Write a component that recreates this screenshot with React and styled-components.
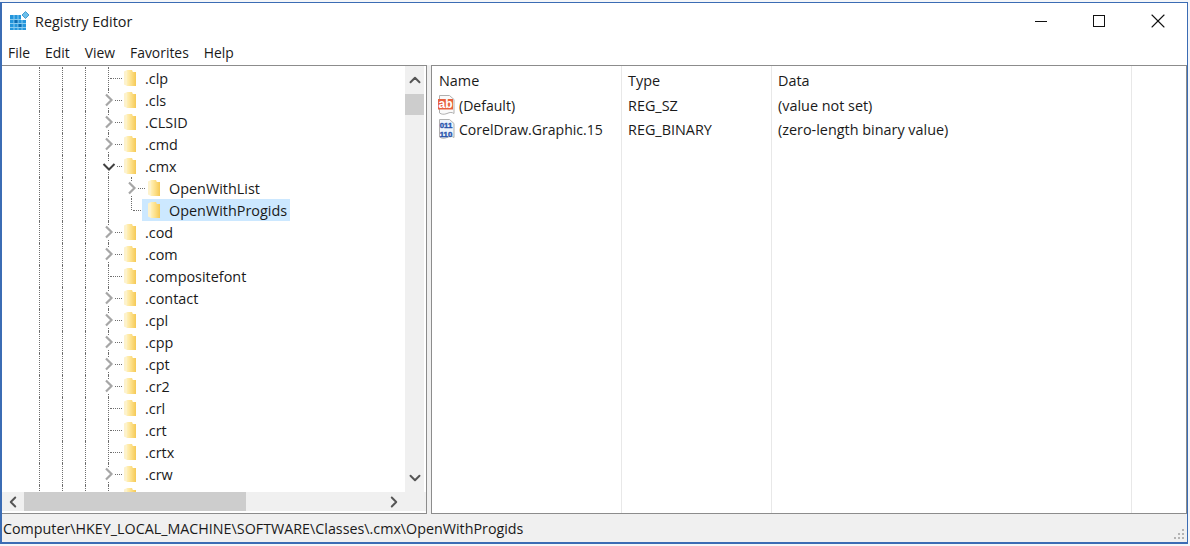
import React from 'react';
import styled, {createGlobalStyle} from 'styled-components';
import {X, ChevronUp, ChevronDown, ChevronLeft, ChevronRight} from 'lucide-react';

const treeItems = [
    {name: ".clp"},
    {name: ".cls", arrow: "closed"},
    {name: ".CLSID", arrow: "closed"},
    {name: ".cmd", arrow: "closed"},
    {name: ".cmx", arrow: "open"},
    {name: "OpenWithList", arrow: "closed", child: true},
    {name: "OpenWithProgids", child: true, last: true, selected: true},
    {name: ".cod", arrow: "closed"},
    {name: ".com", arrow: "closed"},
    {name: ".compositefont"},
    {name: ".contact", arrow: "closed"},
    {name: ".cpl", arrow: "closed"},
    {name: ".cpp", arrow: "closed"},
    {name: ".cpt", arrow: "closed"},
    {name: ".cr2", arrow: "closed"},
    {name: ".crl"},
    {name: ".crt"},
    {name: ".crtx"},
    {name: ".crw", arrow: "closed"},
    {name: ""},
];

const values = [
    {name: "(Default)", type: "REG_SZ", data: "(value not set)", kind: "string"},
    {name: "CorelDraw.Graphic.15", type: "REG_BINARY", data: "(zero-length binary value)", kind: "binary"},
];

const menus = ["File", "Edit", "View", "Favorites", "Help"];

const RegistryLogo = () => (
    <svg width="20" height="20" viewBox="0 0 20 20">
        <rect x="0" y="4" width="16" height="15" fill="#2496dc"/>
        <path d="M0 8.500h16M0 12.500h16M0 16.500h16M4 4v15M8 4v15M12 4v15" stroke="#8accf0" strokeWidth="1"/>
        <rect x="4.500" y="9" width="3" height="3" fill="#0f6cb0"/>
        <rect x="8.500" y="13" width="3" height="3" fill="#0f6cb0"/>
        <rect x="11" y="2" width="7" height="7" fill="#fff"/>
        <path d="M15.500 0.500l3.500 3.500-3.500 3.500-3.500-3.500z" fill="#6cbfeb" stroke="#2a8bc8" strokeWidth="0.800"/>
    </svg>
);

const Folder = () => (
    <svg width="12" height="18" viewBox="0 0 12 18">
        <defs>
            <linearGradient id="folderBody" x1="0" x2="1" y1="0" y2="0">
                <stop offset="0" stopColor="#fff0b8"/>
                <stop offset="0.450" stopColor="#fde08a"/>
                <stop offset="1" stopColor="#f5c955"/>
            </linearGradient>
        </defs>
        <path d="M0 2.500L3 1v16l-3-1.500z" fill="#fdf2cc"/>
        <path d="M3 1h5l0.800 2H12v14H3z" fill="url(#folderBody)"/>
    </svg>
);

const StringIcon = () => (
    <svg width="20" height="20" viewBox="0 0 20 20">
        <path d="M2.500 0.500h10l4.500 4v14c-2-1.400-4-1.400-7 0-3 1.200-5.500 0.900-7.500-0.500z" fill="#fafafa" stroke="#b0b0b0"/>
        <rect x="1" y="4" width="15" height="10.500" fill="#e8623f"/>
        <IconText x="8.500" y="12.500" size="12" fill="#fff">ab</IconText>
    </svg>
);

const BinaryIcon = () => (
    <svg width="20" height="20" viewBox="0 0 20 20">
        <path d="M2.500 0.500h10l4.500 4v14c-2-1.400-4-1.400-7 0-3 1.200-5.500 0.900-7.500-0.500z" fill="#eef4fc" stroke="#b0b0b0"/>
        <IconText x="9" y="8.500" size="7.800" fill="#2a56ad" stroke="#2a56ad" strokeWidth="0.400">011</IconText>
        <IconText x="9" y="17.500" size="7.800" fill="#2a56ad" stroke="#2a56ad" strokeWidth="0.400">110</IconText>
    </svg>
);

const IconText = styled.text.attrs(p => ({textAnchor: "middle", fontSize: p.size}))`
  font-family: "Liberation Sans", sans-serif;
  font-weight: 700;
`;

const TreeRow = ({item}) => {
    const guideCount = item.child ? 4 : 3;
    return (
        <Row>
            {Array.from({length: guideCount}).map((_, i) => <Guide key={i}/>)}
            <Branch $last={item.last}>
                {item.arrow === "closed" && (
                    <ClosedArrow width="10" height="14" viewBox="0 0 10 14">
                        <polyline points="2,1.500 7.500,7 2,12.500" fill="none" stroke="#a6a6a6" strokeWidth="2.200"/>
                    </ClosedArrow>
                )}
                {item.arrow === "open" && (
                    <OpenArrow width="14" height="10" viewBox="0 0 14 10">
                        <polyline points="1.500,2 7,7.500 12.500,2" fill="none" stroke="#404040" strokeWidth="2"/>
                    </OpenArrow>
                )}
            </Branch>
            <Label $selected={item.selected} $child={item.child}>
                <Folder/>
                {item.name && <span>{item.name}</span>}
            </Label>
        </Row>
    );
};

const App = () => {
    return (
        <>
            <GlobalStyle/>
            <Window>
                <TitleBar>
                    <RegistryLogo/>
                    <Title>Registry Editor</Title>
                    <WindowButtons>
                        <WindowButton><MinimizeLine/></WindowButton>
                        <WindowButton><MaximizeBox/></WindowButton>
                        <WindowButton><X size={24} strokeWidth={1.1} absoluteStrokeWidth/></WindowButton>
                    </WindowButtons>
                </TitleBar>
                <MenuBar>
                    {menus.map(m => <MenuItem key={m}>{m}</MenuItem>)}
                </MenuBar>
                <Panes>
                    <TreePane>
                        <TreeBody>
                            <Tree>
                                {treeItems.map((item, i) => <TreeRow key={i} item={item}/>)}
                            </Tree>
                            <VScroll>
                                <ScrollButton><ChevronUp size={18} strokeWidth={2.6}/></ScrollButton>
                                <VTrack><VThumb/></VTrack>
                                <ScrollButton><ChevronDown size={18} strokeWidth={2.6}/></ScrollButton>
                            </VScroll>
                        </TreeBody>
                        <HScroll>
                            <HButton><ChevronLeft size={18} strokeWidth={2.6}/></HButton>
                            <HTrack><HThumb/></HTrack>
                            <HButton><ChevronRight size={18} strokeWidth={2.6}/></HButton>
                            <Corner/>
                        </HScroll>
                    </TreePane>
                    <ListPane>
                        <Columns>
                            <Column $width={190} $inset={1}>
                                <Heading>Name</Heading>
                                {values.map(v => (
                                    <NameCell key={v.name}>
                                        {v.kind === "string" ? <StringIcon/> : <BinaryIcon/>}
                                        <span>{v.name}</span>
                                    </NameCell>
                                ))}
                            </Column>
                            <Column $width={150}>
                                <Heading>Type</Heading>
                                {values.map(v => <Cell key={v.name}>{v.type}</Cell>)}
                            </Column>
                            <Column $width={360}>
                                <Heading>Data</Heading>
                                {values.map(v => <Cell key={v.name}>{v.data}</Cell>)}
                            </Column>
                        </Columns>
                    </ListPane>
                </Panes>
                <StatusBar>
                    <span>Computer\HKEY_LOCAL_MACHINE\SOFTWARE\Classes\.cmx\OpenWithProgids</span>
                    <Grip viewBox="0 0 12 12" width="12" height="12">
                        <path d="M9 1h2v2H9zM5 5h2v2H5zM9 5h2v2H9zM1 9h2v2H1zM5 9h2v2H5zM9 9h2v2H9z" fill="#b4b4b4"/>
                    </Grip>
                </StatusBar>
            </Window>
        </>
    );
}

const GlobalStyle = createGlobalStyle`
  html, body {
    margin: 0;
    padding: 0;
    background: #f4f6f9;
  }
  body {
    font-family: "Open Sans", "Noto Sans", sans-serif;
    font-size: 14.4px;
    color: #1a1a1a;
  }
`;

const Window = styled.div`
  box-sizing: border-box;
  width: 1188px;
  height: 542px;
  margin-top: 2px;
  display: flex;
  flex-direction: column;
  background: #fff;
  border-style: solid;
  border-color: #3b6cb4;
  border-width: 1px 1px 2px 2px;
  overflow: hidden;
`;

const TitleBar = styled.div`
  flex: none;
  box-sizing: border-box;
  height: 38px;
  padding: 0 0 2px 8px;
  display: flex;
  align-items: center;
`;

const Title = styled.div`
  margin-left: 5px;
  font-size: 14.400px;
`;

const WindowButtons = styled.div`
  margin-left: auto;
  display: flex;
`;

const WindowButton = styled.div`
  width: 58.500px;
  height: 34px;
  display: flex;
  align-items: center;
  justify-content: center;
  color: #111;
`;

const MinimizeLine = styled.div`
  width: 12px;
  height: 1px;
  background: #111;
`;

const MaximizeBox = styled.div`
  box-sizing: border-box;
  width: 12px;
  height: 12px;
  border: 1px solid #111;
`;

const MenuBar = styled.div`
  flex: none;
  height: 24px;
  display: flex;
  align-items: center;
  padding-left: 6px;
  gap: 15px;
  font-size: 13.900px;
  background: #fff;
`;

const MenuItem = styled.div`
  line-height: 22px;
`;

const Panes = styled.div`
  flex: 1;
  min-height: 0;
  display: flex;
  gap: 4px;
  background: #f0f0f0;
`;

const TreePane = styled.div`
  box-sizing: border-box;
  width: 425px;
  display: flex;
  flex-direction: column;
  background: #fff;
  border-top: 1px solid #8c8c8c;
  border-right: 1px solid #8c8c8c;
  border-bottom: 1px solid #8c8c8c;
`;

const TreeBody = styled.div`
  flex: 1;
  min-height: 0;
  display: flex;
`;

const Tree = styled.div`
  flex: 1;
  min-width: 0;
  overflow: hidden;
  padding-top: 1px;
`;

const Row = styled.div`
  display: flex;
  height: 22px;
  padding-left: 37px;
`;

const Guide = styled.div`
  box-sizing: border-box;
  flex: none;
  width: 23px;
  border-left: 1px dotted #6e6e6e;
`;

const Branch = styled.div`
  position: relative;
  flex: none;
  width: 11px;

  &::before {
    content: "";
    position: absolute;
    left: 0;
    top: 0;
    height: ${p => p.$last ? "11px" : "22px"};
    border-left: 1px dotted #6e6e6e;
  }

  &::after {
    content: "";
    position: absolute;
    left: 2px;
    top: 11px;
    width: 12px;
    border-top: 1px dotted #6e6e6e;
  }
`;

const ClosedArrow = styled.svg`
  position: absolute;
  z-index: 1;
  left: -4px;
  top: 4px;
  background: #fff;
`;

const OpenArrow = styled.svg`
  position: absolute;
  z-index: 1;
  left: -6px;
  top: 7px;
  background: #fff;
`;

const Label = styled.div`
  position: relative;
  z-index: 2;
  display: flex;
  align-items: center;
  height: 22px;
  gap: 9px;
  padding: 0 3px 0 ${p => p.$child ? "6px" : "5px"};
  background: ${p => p.$selected ? "#cce8ff" : "transparent"};
  white-space: nowrap;
`;

const VScroll = styled.div`
  flex: none;
  width: 19px;
  margin-right: 2px;
  display: flex;
  flex-direction: column;
  background: #f0f0f0;
`;

const ScrollButton = styled.div`
  flex: none;
  height: 28px;
  display: flex;
  align-items: center;
  justify-content: center;
  color: #555;
`;

const VTrack = styled.div`
  flex: 1;
`;

const VThumb = styled.div`
  height: 21px;
  background: #cdcdcd;
`;

const HScroll = styled.div`
  flex: none;
  height: 19px;
  margin-bottom: 2px;
  display: flex;
  align-items: center;
  background: #f0f0f0;
`;

const HButton = styled.div`
  flex: none;
  width: 22px;
  height: 19px;
  display: flex;
  align-items: center;
  justify-content: center;
  color: #555;
`;

const HTrack = styled.div`
  flex: 1;
  height: 19px;
`;

const HThumb = styled.div`
  width: 222px;
  height: 19px;
  background: #cdcdcd;
`;

const Corner = styled.div`
  flex: none;
  width: 21px;
`;

const ListPane = styled.div`
  box-sizing: border-box;
  flex: 1;
  background: #fff;
  border: 1px solid #8c8c8c;
`;

const Columns = styled.div`
  display: flex;
  height: 100%;
`;

const Column = styled.div`
  box-sizing: border-box;
  flex: none;
  width: ${p => p.$width}px;
  padding-left: ${p => p.$inset || 0}px;
  border-right: 1px solid #e8e8e8;
`;

const Heading = styled.div`
  box-sizing: border-box;
  height: 27px;
  padding: 1px 0 0 6px;
  display: flex;
  align-items: center;
`;

const Cell = styled.div`
  height: 24px;
  padding-left: 6px;
  display: flex;
  align-items: center;
  white-space: nowrap;
`;

const NameCell = styled(Cell)`
  padding-left: 4px;
  gap: 2px;
  font-size: 14.050px;
`;

const StatusBar = styled.div`
  position: relative;
  flex: none;
  height: 28px;
  display: flex;
  align-items: center;
  padding-left: 1px;
  font-size: 14.300px;
  background: #f0f0f0;
`;

const Grip = styled.svg`
  position: absolute;
  right: 2px;
  bottom: 2px;
`;

export default App;
